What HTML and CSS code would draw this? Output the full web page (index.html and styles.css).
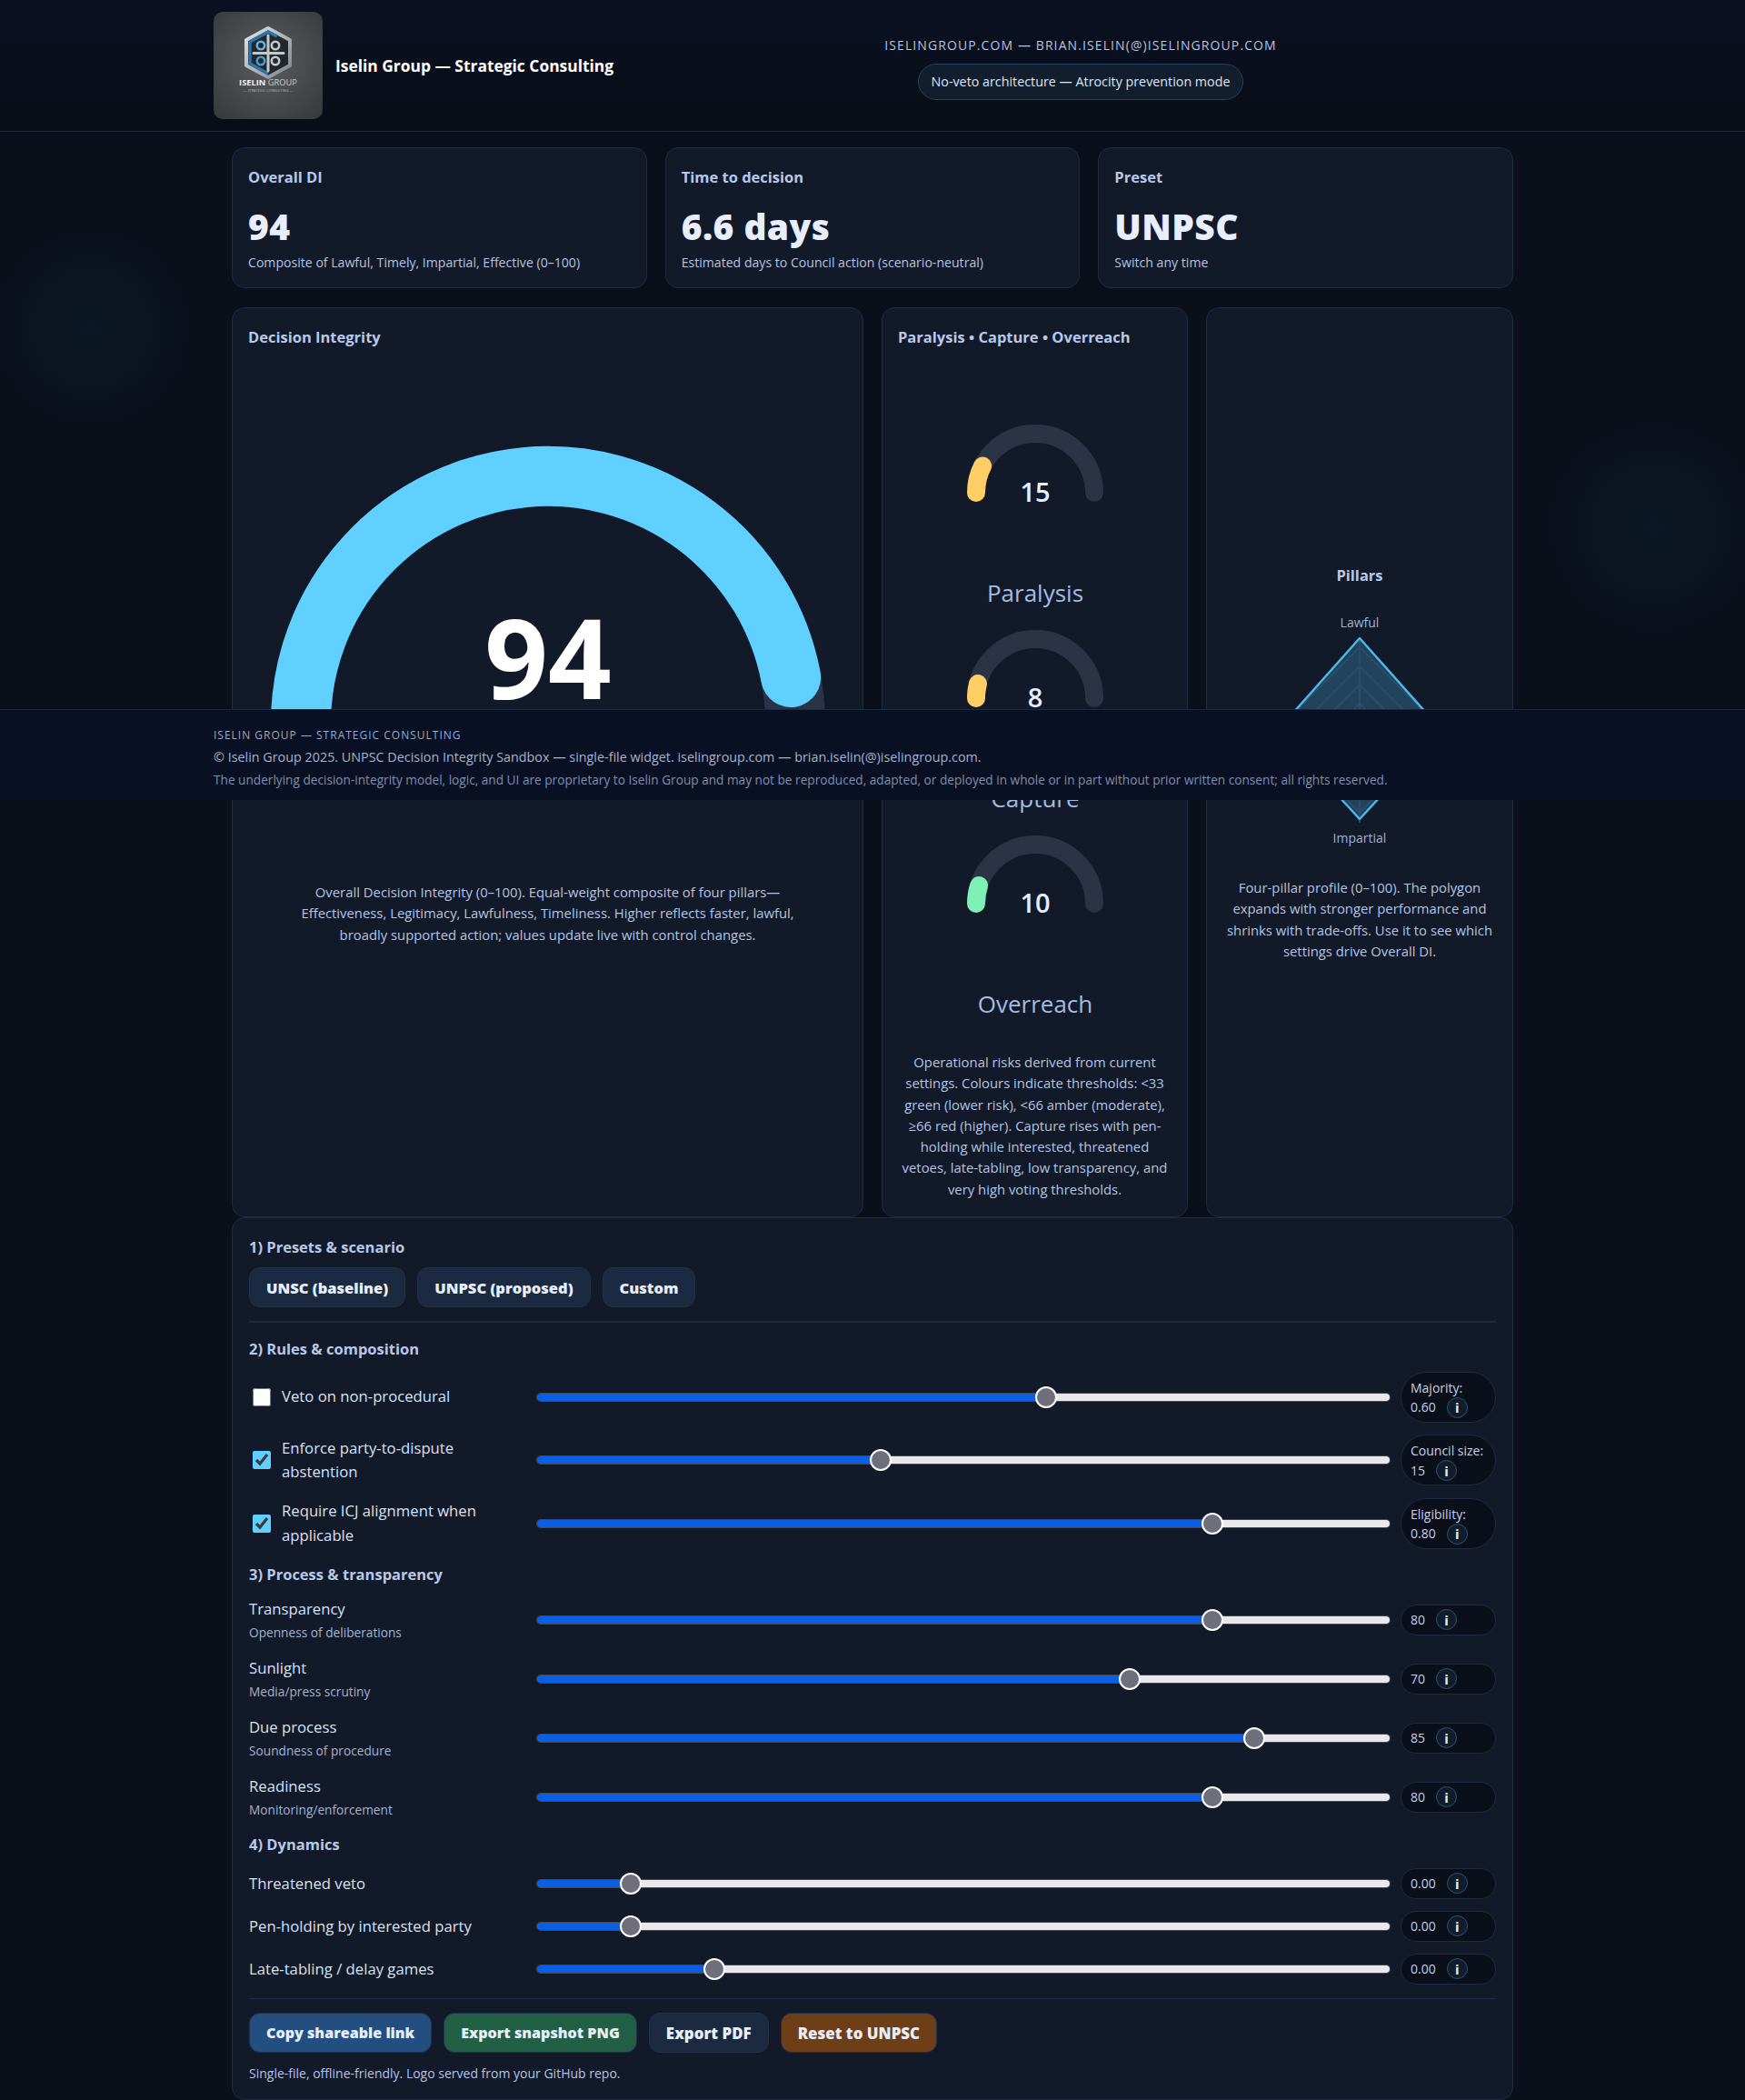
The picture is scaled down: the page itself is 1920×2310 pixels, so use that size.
FILE: index.html
```html
<!DOCTYPE html>
<html lang="en">
<head>
  <meta charset="UTF-8" />
  <meta name="viewport" content="width=device-width, initial-scale=1.0"/>
  <title>UNPSC Decision Integrity Sandbox</title>
  <link rel="stylesheet" href="styles.css">
</head>
<body>
  <header class="site-header">
    <div class="brand">
      <div class="logo">
        <svg viewBox="0 0 120 118" width="120" height="118">
          <defs>
            <linearGradient id="rim" x1="0" y1="0" x2="1" y2="1">
              <stop offset="0" stop-color="#dfe4e8"/>
              <stop offset="1" stop-color="#7d8690"/>
            </linearGradient>
          </defs>
          <path d="M60 18 L84 31 V59 L60 72 L36 59 V31 Z" fill="#24282d" stroke="url(#rim)" stroke-width="4" stroke-linejoin="round"/>
          <path d="M70 27 L60 22 L40 33 V57 L60 68" fill="none" stroke="#2b76a6" stroke-width="3.5"/>
          <path d="M60 26 V65 M44 45.5 H77" stroke="#c3c8cd" stroke-width="3" stroke-linecap="round"/>
          <circle cx="52" cy="37" r="4.2" fill="none" stroke="#62b5de" stroke-width="2.6"/>
          <circle cx="68" cy="37" r="4.2" fill="none" stroke="#c3c8cd" stroke-width="2.6"/>
          <circle cx="52" cy="54" r="4.2" fill="none" stroke="#4a9cc8" stroke-width="2.6"/>
          <circle cx="68" cy="54" r="4.2" fill="none" stroke="#c3c8cd" stroke-width="2.6"/>
          <text x="60" y="80.5" class="logo-name" text-anchor="middle"><tspan class="logo-bold">ISELIN</tspan> GROUP</text>
          <text x="60" y="87.5" class="logo-sub" text-anchor="middle">— STRATEGIC CONSULTING —</text>
        </svg>
      </div>
      <div class="brand-name">Iselin Group — Strategic Consulting</div>
    </div>
    <div class="header-center">
      <div class="contact">ISELINGROUP.COM — BRIAN.ISELIN(@)ISELINGROUP.COM</div>
      <div class="mode-pill">No-veto architecture — Atrocity prevention mode</div>
    </div>
  </header>

  <main class="page">
    <section class="kpis">
      <div class="card kpi">
        <div class="card-title">Overall DI</div>
        <div class="kpi-value">94</div>
        <div class="kpi-note">Composite of Lawful, Timely, Impartial, Effective (0–100)</div>
      </div>
      <div class="card kpi">
        <div class="card-title">Time to decision</div>
        <div class="kpi-value">6.6 days</div>
        <div class="kpi-note">Estimated days to Council action (scenario-neutral)</div>
      </div>
      <div class="card kpi">
        <div class="card-title">Preset</div>
        <div class="kpi-value">UNPSC</div>
        <div class="kpi-note">Switch any time</div>
      </div>
    </section>

    <section class="charts">
      <div class="card chart-main">
        <div class="card-title">Decision Integrity</div>
        <svg class="big-gauge" viewBox="0 0 695 570" width="695" height="570">
          <path d="M75 396 A272 272 0 0 1 619 396" class="track" stroke-width="66"/>
          <path d="M75 396 A272 272 0 0 1 614.2 345" class="big-value" stroke-width="66"/>
          <text x="347" y="369" class="big-num" text-anchor="middle">94</text>
        </svg>
        <p class="chart-text">Overall Decision Integrity (0–100). Equal-weight composite of four pillars—Effectiveness, Legitimacy, Lawfulness, Timeliness. Higher reflects faster, lawful, broadly supported action; values update live with control changes.</p>
      </div>

      <div class="card chart-risks">
        <div class="card-title">Paralysis • Capture • Overreach</div>
        <div class="risk-list">
          <svg class="risk" viewBox="0 0 200 226" width="200" height="226">
            <path d="M35 93 A65 65 0 0 1 165 93" class="track" stroke-width="20"/>
            <path d="M35 93 A65 65 0 0 1 42.1 63.5" class="amber" stroke-width="20"/>
            <text x="100" y="103" class="risk-num" text-anchor="middle">15</text>
            <text x="100" y="213" class="risk-label" text-anchor="middle">Paralysis</text>
          </svg>
          <svg class="risk" viewBox="0 0 200 226" width="200" height="226">
            <path d="M35 93 A65 65 0 0 1 165 93" class="track" stroke-width="20"/>
            <path d="M35 93 A65 65 0 0 1 37 77" class="amber" stroke-width="20"/>
            <text x="100" y="103" class="risk-num" text-anchor="middle">8</text>
            <text x="100" y="213" class="risk-label" text-anchor="middle">Capture</text>
          </svg>
          <svg class="risk" viewBox="0 0 200 226" width="200" height="226">
            <path d="M35 93 A65 65 0 0 1 165 93" class="track" stroke-width="20"/>
            <path d="M35 93 A65 65 0 0 1 38.2 73" class="green" stroke-width="20"/>
            <text x="100" y="103" class="risk-num" text-anchor="middle">10</text>
            <text x="100" y="213" class="risk-label" text-anchor="middle">Overreach</text>
          </svg>
        </div>
        <p class="chart-text">Operational risks derived from current settings. Colours indicate thresholds: &lt;33 green (lower risk), &lt;66 amber (moderate), ≥66 red (higher). Capture rises with pen-holding while interested, threatened vetoes, late-tabling, low transparency, and very high voting thresholds.</p>
      </div>

      <div class="card chart-pillars">
        <svg class="radar" viewBox="0 0 336 348" width="336" height="348">
          <text x="168" y="22" class="radar-title" text-anchor="middle">Pillars</text>
          <text x="168" y="73" class="radar-label" text-anchor="middle">Lawful</text>
          <polygon points="168,85 258,186 168,284 78,186" class="radar-area"/>
          <g class="radar-grid">
            <polygon points="168,95 259,186 168,277 77,186"/>
            <polygon points="168,116 238,186 168,256 98,186"/>
            <polygon points="168,136 218,186 168,236 118,186"/>
            <polygon points="168,157 197,186 168,215 139,186"/>
            <path d="M168 85 V288 M66 186 H270"/>
          </g>
          <polygon points="168,85 258,186 168,284 78,186" class="radar-line"/>
          <text x="168" y="310" class="radar-label" text-anchor="middle">Impartial</text>
        </svg>
        <p class="chart-text">Four-pillar profile (0–100). The polygon expands with stronger performance and shrinks with trade-offs. Use it to see which settings drive Overall DI.</p>
      </div>
    </section>

    <section class="card controls">
      <h3 class="group-title">1) Presets &amp; scenario</h3>
      <div class="btn-row">
        <button class="btn">UNSC (baseline)</button>
        <button class="btn">UNPSC (proposed)</button>
        <button class="btn">Custom</button>
      </div>
      <hr class="divider">

      <h3 class="group-title">2) Rules &amp; composition</h3>
      <div class="ctl ctl-rule ctl-first">
        <label class="check"><input type="checkbox"><span>Veto on non-procedural</span></label>
        <input type="range" class="slider" style="--v:.6" min="0" max="100" value="60">
        <div class="value value-stack"><div>Majority:</div><div class="value-line">0.60 <i class="info">i</i></div></div>
      </div>
      <div class="ctl ctl-rule">
        <label class="check"><input type="checkbox" checked><span>Enforce party-to-dispute abstention</span></label>
        <input type="range" class="slider" style="--v:.4" min="0" max="100" value="40">
        <div class="value value-stack"><div>Council size:</div><div class="value-line">15 <i class="info">i</i></div></div>
      </div>
      <div class="ctl ctl-rule">
        <label class="check"><input type="checkbox" checked><span>Require ICJ alignment when applicable</span></label>
        <input type="range" class="slider" style="--v:.8" min="0" max="100" value="80">
        <div class="value value-stack"><div>Eligibility:</div><div class="value-line">0.80 <i class="info">i</i></div></div>
      </div>

      <h3 class="group-title group-process">3) Process &amp; transparency</h3>
      <div class="ctl ctl-process">
        <div><div class="ctl-name">Transparency</div><div class="ctl-sub">Openness of deliberations</div></div>
        <input type="range" class="slider" style="--v:.8" min="0" max="100" value="80">
        <div class="value"><div class="value-line">80 <i class="info">i</i></div></div>
      </div>
      <div class="ctl ctl-process">
        <div><div class="ctl-name">Sunlight</div><div class="ctl-sub">Media/press scrutiny</div></div>
        <input type="range" class="slider" style="--v:.7" min="0" max="100" value="70">
        <div class="value"><div class="value-line">70 <i class="info">i</i></div></div>
      </div>
      <div class="ctl ctl-process">
        <div><div class="ctl-name">Due process</div><div class="ctl-sub">Soundness of procedure</div></div>
        <input type="range" class="slider" style="--v:.85" min="0" max="100" value="85">
        <div class="value"><div class="value-line">85 <i class="info">i</i></div></div>
      </div>
      <div class="ctl ctl-process">
        <div><div class="ctl-name">Readiness</div><div class="ctl-sub">Monitoring/enforcement</div></div>
        <input type="range" class="slider" style="--v:.8" min="0" max="100" value="80">
        <div class="value"><div class="value-line">80 <i class="info">i</i></div></div>
      </div>

      <h3 class="group-title group-dynamics">4) Dynamics</h3>
      <div class="ctl ctl-dyn">
        <div class="ctl-name">Threatened veto</div>
        <input type="range" class="slider" style="--v:.1" min="0" max="100" value="10">
        <div class="value"><div class="value-line">0.00 <i class="info">i</i></div></div>
      </div>
      <div class="ctl ctl-dyn">
        <div class="ctl-name">Pen-holding by interested party</div>
        <input type="range" class="slider" style="--v:.1" min="0" max="100" value="10">
        <div class="value"><div class="value-line">0.00 <i class="info">i</i></div></div>
      </div>
      <div class="ctl ctl-dyn">
        <div class="ctl-name">Late-tabling / delay games</div>
        <input type="range" class="slider" style="--v:.2" min="0" max="100" value="20">
        <div class="value"><div class="value-line">0.00 <i class="info">i</i></div></div>
      </div>

      <hr class="divider divider-end">
      <div class="btn-row btn-row-end">
        <button class="btn btn-blue">Copy shareable link</button>
        <button class="btn btn-green">Export snapshot PNG</button>
        <button class="btn btn-caps">Export PDF</button>
        <button class="btn btn-orange btn-caps">Reset to UNPSC</button>
      </div>
      <p class="footnote">Single-file, offline-friendly. Logo served from your GitHub repo.</p>
    </section>
  </main>

  <footer class="site-footer">
    <div class="footer-brand">ISELIN GROUP — STRATEGIC CONSULTING</div>
    <div class="footer-copy">© Iselin Group 2025. UNPSC Decision Integrity Sandbox — single-file widget. iselingroup.com — brian.iselin(@)iselingroup.com.</div>
    <div class="footer-legal">The underlying decision-integrity model, logic, and UI are proprietary to Iselin Group and may not be reproduced, adapted, or deployed in whole or in part without prior written consent; all rights reserved.</div>
  </footer>
</body>
</html>
```

FILE: styles.css
```css
* {
  box-sizing: border-box;
}

html, body {
  height: 2310px;
  overflow: hidden;
}

body {
  margin: 0;
  position: relative;
  font-family: "Open Sans", "Noto Sans", sans-serif;
  color: #e8eefc;
  background:
    radial-gradient(circle at 100px 360px, rgba(20, 80, 120, .13), transparent 130px),
    radial-gradient(circle at 1820px 580px, rgba(20, 80, 120, .13), transparent 140px),
    #0a0f19;
}

/* header */
.site-header {
  height: 145px;
  padding: 13px 235px 0;
  display: flex;
  border-bottom: 1px solid #1d2b42;
  background: linear-gradient(#0b1122, #090d17);
}

.brand {
  display: flex;
  align-items: center;
  gap: 14px;
  height: 118px;
  width: 724px;
}

.logo {
  width: 120px;
  height: 118px;
  border-radius: 10px;
  overflow: hidden;
  background: radial-gradient(circle at 50% 45%, #5a5c5f, #36393c);
}

.logo svg {
  display: block;
}

.logo-name {
  font-size: 9.3px;
  fill: #c8ced4;
}

.logo-bold {
  font-weight: 700;
  fill: #eef1f4;
}

.logo-sub {
  font-size: 3.9px;
  fill: #aeb5bb;
}

.brand-name {
  font-size: 17.4px;
  font-weight: 700;
  color: #fff;
}

.header-center {
  width: 460px;
  text-align: center;
  padding-top: 27px;
  white-space: nowrap;
}

.contact {
  font-size: 14px;
  letter-spacing: 1.1px;
  color: #b4c3e2;
}

.mode-pill {
  display: inline-block;
  margin-top: 11px;
  padding: 9px 14px;
  font-size: 14.3px;
  line-height: 20px;
  color: #dbe6f8;
  background: #121e2e;
  border: 1px solid #24425a;
  border-radius: 20px;
}

/* page */
.page {
  width: 1410px;
  margin: 0 auto;
  padding-top: 17px;
}

.card {
  background: #121a2a;
  border: 1px solid #1f2b42;
  border-radius: 14px;
}

.card-title {
  font-size: 16.5px;
  font-weight: 700;
  line-height: 23px;
  color: #b9c8e8;
}

.kpis {
  display: grid;
  grid-template-columns: repeat(3, 1fr);
  gap: 20px;
}

.kpi {
  height: 155px;
  padding: 20px 17px;
}

.kpi-value {
  margin-top: 19px;
  font-family: "Noto Sans", "Open Sans", sans-serif;
  font-size: 39px;
  line-height: 48px;
  font-weight: 900;
  letter-spacing: .4px;
  color: #e8eefc;
}

.kpi-note {
  margin-top: 6px;
  font-size: 14.1px;
  color: #b4c3e2;
}

.charts {
  display: grid;
  grid-template-columns: 695px 1fr 1fr;
  gap: 20px;
  margin-top: 21px;
}

.chart-main, .chart-risks, .chart-pillars {
  height: 1001px;
  padding: 20px 17px;
}

.big-gauge {
  display: block;
  margin: 18px -17px 0;
}

.track, .big-value, .amber, .green {
  fill: none;
  stroke-linecap: round;
}

.track {
  stroke: #2a3446;
}

.big-value {
  stroke: #5fd0ff;
}

.amber {
  stroke: #ffcf66;
}

.green {
  stroke: #7ef0b5;
}

.big-num {
  font-size: 122px;
  font-weight: 700;
  fill: #fff;
}

.chart-text {
  margin: 0;
  font-size: 14.85px;
  line-height: 23.3px;
  text-align: center;
  color: #b4c3e2;
}

.chart-main .chart-text {
  padding: 0 40px;
}

.risk-list {
  margin-top: 67px;
  display: flex;
  flex-direction: column;
  align-items: center;
}

.risk {
  display: block;
}

.risk-num {
  font-size: 29px;
  font-weight: 600;
  fill: #e8eefc;
}

.risk-label {
  font-size: 26px;
  fill: #a6bbe0;
}

.chart-risks .chart-text {
  margin-top: 30px;
}

.chart-pillars {
  padding-top: 278px;
}

.radar {
  display: block;
  margin: 0 -17px;
}

.radar-title {
  font-size: 16.5px;
  font-weight: 700;
  fill: #b9c8e8;
}

.radar-label {
  font-size: 14px;
  fill: #9fb2d6;
}

.radar-area {
  fill: #22435a;
}

.radar-grid {
  fill: none;
  stroke: #2f4f72;
  stroke-width: 1.5;
}

.radar-line {
  fill: none;
  stroke: #4bb8e6;
  stroke-width: 2.5;
  stroke-linejoin: round;
}

/* controls */
.controls {
  padding: 20px 18px 0;
  height: 971px;
}

.group-title {
  margin: 0;
  font-size: 16.5px;
  font-weight: 700;
  color: #b9c8e8;
}

.btn-row {
  display: flex;
  gap: 13px;
  margin-top: 11px;
}

.btn {
  height: 44px;
  padding: 0 18px;
  font-family: inherit;
  font-size: 16.5px;
  font-weight: 800;
  color: #e8eefc;
  background: #1b2a40;
  border: 1px solid #22324a;
  border-radius: 12px;
}

.btn-blue {
  background: #224f80;
}

.btn-green {
  background: #216044;
}

.btn-orange {
  background: #6e3f16;
}

.divider {
  margin: 15px 0 17px;
  border: 0;
  border-top: 2px solid #1f2b42;
}

.ctl {
  display: grid;
  grid-template-columns: 317px 938px 1fr;
  align-items: center;
}

.ctl-first {
  margin-top: 13.5px;
}

.ctl-rule {
  height: 56px;
  margin-bottom: 13.5px;
}

.ctl-process {
  height: 65px;
}

.ctl-dyn {
  height: 47px;
}

.group-process {
  margin-top: 16.5px;
  margin-bottom: 6px;
}

.group-dynamics {
  margin-top: 7.5px;
  margin-bottom: 8.5px;
}

.check {
  display: flex;
  align-items: center;
  gap: 12px;
  padding-left: 4px;
  padding-right: 40px;
  font-size: 16.7px;
  line-height: 26.5px;
  color: #d7e1f4;
}

.check input {
  flex: none;
  width: 20px;
  height: 20px;
  margin: 0;
  accent-color: #5fd0ff;
}

.ctl-name {
  font-size: 16.7px;
  color: #d7e1f4;
}

.ctl-sub {
  margin-top: 5px;
  font-size: 13.7px;
  color: #a3b3d0;
}

.slider {
  -webkit-appearance: none;
  appearance: none;
  width: 938px;
  height: 24px;
  margin: 0;
  background: transparent;
}

.slider::-webkit-slider-runnable-track {
  height: 8px;
  border-radius: 4px;
  background: linear-gradient(to right, #0a5fe6 calc(12px + (100% - 24px) * var(--v)), #e9e9ec 0);
  box-shadow: 0 0 0 1px rgba(120, 120, 130, .5);
}

.slider::-webkit-slider-thumb {
  -webkit-appearance: none;
  width: 24px;
  height: 24px;
  margin-top: -8px;
  border-radius: 50%;
  background: #6e6f7a;
  border: 2px solid #fff;
}

.value {
  justify-self: end;
  width: 105px;
  height: 34px;
  padding: 0 10px;
  display: flex;
  align-items: center;
  font-size: 14px;
  color: #c4d1ea;
  background: #0a0f1a;
  border: 1px solid #1f2b42;
  border-radius: 20px;
}

.value-stack {
  height: 56px;
  display: block;
  padding-top: 7px;
  line-height: 20px;
  border-radius: 28px;
}

.value-line {
  display: flex;
  align-items: center;
  gap: 12px;
}

.info {
  display: inline-flex;
  align-items: center;
  justify-content: center;
  width: 23px;
  height: 23px;
  font-size: 15px;
  font-style: normal;
  font-weight: 700;
  color: #e8eefc;
  background: #111d2c;
  border: 1px solid #2a5570;
  border-radius: 50%;
}

.divider-end {
  margin: 9px 0 15px;
  border-top-width: 1px;
}

.btn-row-end {
  gap: 13px;
  margin-top: 0;
}

.btn-row-end .btn {
  font-size: 16.1px;
}

.btn-row-end .btn-caps {
  font-size: 16.9px;
}

.footnote {
  margin: 13px 0 0;
  font-size: 14px;
  color: #b4c3e2;
}

/* footer sits over the page, it was fixed to the first screen */
.site-footer {
  position: absolute;
  top: 780px;
  left: 0;
  right: 0;
  height: 100px;
  padding: 19px 235px 0;
  background: #0a1024;
  border-top: 1px solid #1d2b42;
}

.footer-brand {
  font-size: 12px;
  letter-spacing: 1px;
  color: #9aa8c4;
}

.footer-copy {
  margin-top: 6px;
  font-size: 14.35px;
  color: #a5b2cc;
}

.footer-legal {
  margin-top: 6px;
  font-size: 13.65px;
  color: #7f8eab;
}
```
